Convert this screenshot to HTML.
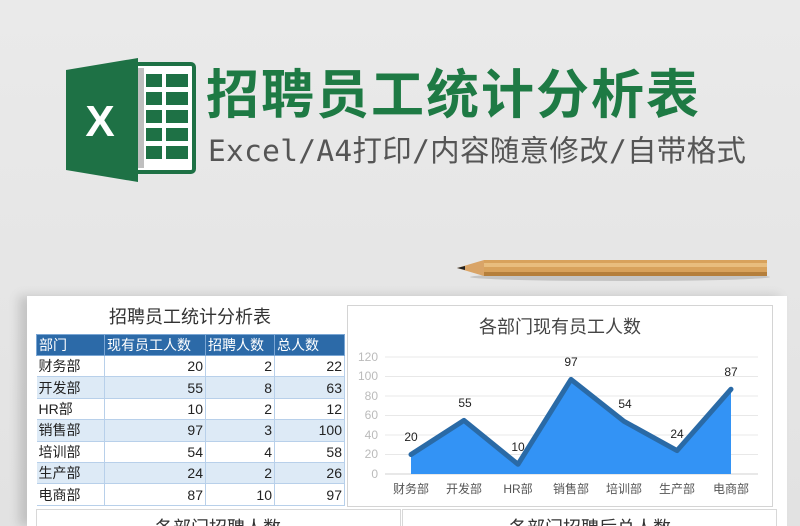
<!DOCTYPE html>
<html><head><meta charset="utf-8"><style>
html,body{margin:0;width:800px;height:526px;overflow:hidden}
body{background:linear-gradient(#eaeaea,#e2e2e2);font-family:"Liberation Sans","Noto Sans CJK SC",sans-serif;position:relative}
.abs{position:absolute}
.t1{left:206px;top:60px;font-size:53px;font-weight:bold;color:#1e7a44;letter-spacing:2px;white-space:nowrap;line-height:72px}
.t2{left:208px;top:130px;font-size:29.5px;color:#555;letter-spacing:0.3px;white-space:nowrap;line-height:42px;font-family:"DejaVu Sans Mono","Noto Sans CJK SC",monospace}
.paper{left:27px;top:296px;width:760px;height:230px;background:#fff;box-shadow:-8px 0 10px rgba(0,0,0,.15)}
table{border-collapse:collapse;position:absolute;left:36px;top:334px;font-size:14px;color:#222;table-layout:fixed;width:308px}
td{border:1px solid #b8d0ea;height:20.4px;padding:0 2px;text-align:right;line-height:20px}
td:first-child{text-align:left;border-left:none}
th{background:#2c6aa8;color:#fff;font-weight:normal;text-align:left;height:20px;padding:0 2px;border:1px solid #7aa6d4;font-size:14px}
tr.a td{background:#ddeaf6}
</style></head><body>
<svg class="abs" style="left:62px;top:56px" width="136" height="126" viewBox="0 0 136 126">
<rect x="62" y="8" width="70" height="108" rx="3" fill="#fff" stroke="#1e7145" stroke-width="4"/>
<rect x="72" y="12" width="10" height="100" fill="#bfbfbf"/>
<g fill="#1e7145"><rect x="84" y="18" width="16" height="13"/><rect x="104" y="18" width="22" height="13"/><rect x="84" y="36" width="16" height="13"/><rect x="104" y="36" width="22" height="13"/><rect x="84" y="54" width="16" height="13"/><rect x="104" y="54" width="22" height="13"/><rect x="84" y="72" width="16" height="13"/><rect x="104" y="72" width="22" height="13"/><rect x="84" y="90" width="16" height="13"/><rect x="104" y="90" width="22" height="13"/></g>
<polygon points="4,14 76,2 76,126 4,114" fill="#1e7145"/>
<text x="38" y="80" font-size="44" font-weight="bold" fill="#fff" text-anchor="middle" font-family="Liberation Sans">X</text>
</svg>
<div class="abs t1">招聘员工统计分析表</div>
<div class="abs t2">Excel/A4打印/内容随意修改/自带格式</div>
<svg class="abs" style="left:450px;top:256px" width="330" height="28">
<ellipse cx="170" cy="21" rx="150" ry="4" fill="rgba(0,0,0,.14)"/>
<polygon points="7,12 34,4 34,20" fill="#d9a467"/>
<polygon points="7,12 15,10 15,14" fill="#222"/>
<rect x="34" y="4" width="283" height="16" fill="#d8a25c"/>
<rect x="34" y="7" width="283" height="4" fill="#e8bd7e"/>
<rect x="34" y="16" width="283" height="4" fill="#b57f3c"/>
</svg>
<div class="abs paper"></div>
<div class="abs" style="left:36px;top:303px;width:308px;text-align:center;font-size:18px;color:#333">招聘员工统计分析表</div>
<table>
<colgroup><col style="width:68px"><col style="width:101px"><col style="width:69px"><col style="width:70px"></colgroup>
<tr><th>部门</th><th>现有员工人数</th><th>招聘人数</th><th>总人数</th></tr>
<tr><td>财务部</td><td>20</td><td>2</td><td>22</td></tr>
<tr class="a"><td>开发部</td><td>55</td><td>8</td><td>63</td></tr>
<tr><td>HR部</td><td>10</td><td>2</td><td>12</td></tr>
<tr class="a"><td>销售部</td><td>97</td><td>3</td><td>100</td></tr>
<tr><td>培训部</td><td>54</td><td>4</td><td>58</td></tr>
<tr class="a"><td>生产部</td><td>24</td><td>2</td><td>26</td></tr>
<tr><td>电商部</td><td>87</td><td>10</td><td>97</td></tr>
</table>
<svg class="abs" style="left:0;top:0" width="800" height="526" font-family="Liberation Sans,Noto Sans CJK SC,sans-serif">
<rect x="347.5" y="305.5" width="425" height="201" fill="#fff" stroke="#d4d4d4"/>
<text x="560" y="333" font-size="18" fill="#444" text-anchor="middle">各部门现有员工人数</text>
<g stroke="#e8e8e8"><line x1="385" x2="758" y1="357" y2="357"/><line x1="385" x2="758" y1="376.5" y2="376.5"/><line x1="385" x2="758" y1="396" y2="396"/><line x1="385" x2="758" y1="415.5" y2="415.5"/><line x1="385" x2="758" y1="435" y2="435"/><line x1="385" x2="758" y1="454.5" y2="454.5"/></g>
<line x1="385" x2="758" y1="474" y2="474" stroke="#d0d0d0"/>
<g font-size="12" fill="#bbb" text-anchor="end"><text x="378" y="361">120</text><text x="378" y="380">100</text><text x="378" y="400">80</text><text x="378" y="419">60</text><text x="378" y="439">40</text><text x="378" y="458">20</text><text x="378" y="478">0</text></g>
<polygon points="411,474 411,454.5 464,420.4 518,464.3 571,379.4 624,421.3 677,450.6 731,389.2 731,474" fill="#3393f5"/>
<polyline points="411,454.5 464,420.4 518,464.3 571,379.4 624,421.3 677,450.6 731,389.2" fill="none" stroke="#2a6aa6" stroke-width="5" stroke-linejoin="round" stroke-linecap="round"/>
<g font-size="12" fill="#222" text-anchor="middle"><text x="411" y="441">20</text><text x="465" y="407">55</text><text x="518" y="451">10</text><text x="571" y="366">97</text><text x="625" y="408">54</text><text x="677" y="438">24</text><text x="731" y="376">87</text></g>
<g font-size="12" fill="#555" text-anchor="middle"><text x="411" y="493">财务部</text><text x="464" y="493">开发部</text><text x="518" y="493">HR部</text><text x="571" y="493">销售部</text><text x="624" y="493">培训部</text><text x="677" y="493">生产部</text><text x="731" y="493">电商部</text></g>
<rect x="36.5" y="509.5" width="364" height="30" fill="#fff" stroke="#d8d8d8"/>
<rect x="402.5" y="509.5" width="374" height="30" fill="#fff" stroke="#d8d8d8"/>
<text x="218" y="534" font-size="18" fill="#333" text-anchor="middle">各部门招聘人数</text>
<text x="590" y="534" font-size="18" fill="#333" text-anchor="middle">各部门招聘后总人数</text>
</svg>
</body></html>
